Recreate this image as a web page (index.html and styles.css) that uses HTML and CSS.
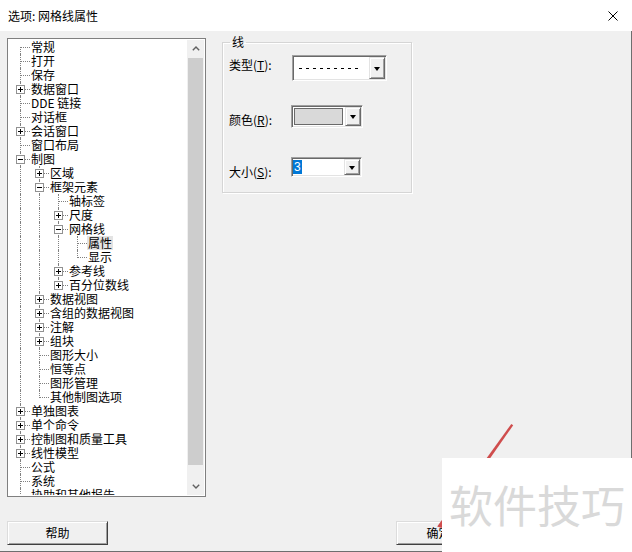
FILE: index.html
```html
<!DOCTYPE html>
<html lang="zh-CN">
<head>
<meta charset="utf-8">
<title>选项: 网格线属性</title>
<link rel="stylesheet" href="styles.css">
</head>
<body>
<div class="window">
  <div class="titlebar">
    <span class="title">选项: 网格线属性</span>
    <svg class="close" width="10" height="10" viewBox="0 0 10 10"><path d="M0.5 0.5L9.5 9.5M9.5 0.5L0.5 9.5" stroke="#000" stroke-width="1" fill="none"/></svg>
  </div>
  <div class="body">
    <div class="main">
      <div class="tree">
        <div class="list">
          <div class="row"><span class="c f"></span><span class="tx">常规</span></div>
          <div class="row"><span class="c t"></span><span class="tx">打开</span></div>
          <div class="row"><span class="c t"></span><span class="tx">保存</span></div>
          <div class="row"><span class="c t"><i class="pm plus"></i></span><span class="tx">数据窗口</span></div>
          <div class="row"><span class="c t"></span><span class="tx">DDE 链接</span></div>
          <div class="row"><span class="c t"></span><span class="tx">对话框</span></div>
          <div class="row"><span class="c t"><i class="pm plus"></i></span><span class="tx">会话窗口</span></div>
          <div class="row"><span class="c t"></span><span class="tx">窗口布局</span></div>
          <div class="row"><span class="c t"><i class="pm"></i></span><span class="tx">制图</span></div>
          <div class="row"><span class="c v"></span><span class="c t"><i class="pm plus"></i></span><span class="tx">区域</span></div>
          <div class="row"><span class="c v"></span><span class="c t"><i class="pm"></i></span><span class="tx">框架元素</span></div>
          <div class="row"><span class="c v"></span><span class="c v"></span><span class="c t"></span><span class="tx">轴标签</span></div>
          <div class="row"><span class="c v"></span><span class="c v"></span><span class="c t"><i class="pm plus"></i></span><span class="tx">尺度</span></div>
          <div class="row"><span class="c v"></span><span class="c v"></span><span class="c t"><i class="pm"></i></span><span class="tx">网格线</span></div>
          <div class="row"><span class="c v"></span><span class="c v"></span><span class="c v"></span><span class="c t"></span><span class="tx sel">属性</span></div>
          <div class="row"><span class="c v"></span><span class="c v"></span><span class="c v"></span><span class="c l"></span><span class="tx">显示</span></div>
          <div class="row"><span class="c v"></span><span class="c v"></span><span class="c t"><i class="pm plus"></i></span><span class="tx">参考线</span></div>
          <div class="row"><span class="c v"></span><span class="c v"></span><span class="c l"><i class="pm plus"></i></span><span class="tx">百分位数线</span></div>
          <div class="row"><span class="c v"></span><span class="c t"><i class="pm plus"></i></span><span class="tx">数据视图</span></div>
          <div class="row"><span class="c v"></span><span class="c t"><i class="pm plus"></i></span><span class="tx">含组的数据视图</span></div>
          <div class="row"><span class="c v"></span><span class="c t"><i class="pm plus"></i></span><span class="tx">注解</span></div>
          <div class="row"><span class="c v"></span><span class="c t"><i class="pm plus"></i></span><span class="tx">组块</span></div>
          <div class="row"><span class="c v"></span><span class="c t"></span><span class="tx">图形大小</span></div>
          <div class="row"><span class="c v"></span><span class="c t"></span><span class="tx">恒等点</span></div>
          <div class="row"><span class="c v"></span><span class="c t"></span><span class="tx">图形管理</span></div>
          <div class="row"><span class="c v"></span><span class="c l"></span><span class="tx">其他制图选项</span></div>
          <div class="row"><span class="c t"><i class="pm plus"></i></span><span class="tx">单独图表</span></div>
          <div class="row"><span class="c t"><i class="pm plus"></i></span><span class="tx">单个命令</span></div>
          <div class="row"><span class="c t"><i class="pm plus"></i></span><span class="tx">控制图和质量工具</span></div>
          <div class="row"><span class="c t"><i class="pm plus"></i></span><span class="tx">线性模型</span></div>
          <div class="row"><span class="c t"></span><span class="tx">公式</span></div>
          <div class="row"><span class="c t"></span><span class="tx">系统</span></div>
          <div class="row"><span class="c t"></span><span class="tx">协助和其他报告</span></div>
        </div>
        <div class="sb">
          <div class="arrow"><svg width="8" height="5" viewBox="0 0 8 5"><path d="M0.8 4.3L4 1.1L7.2 4.3" stroke="#606060" stroke-width="1.4" fill="none"/></svg></div>
          <div class="thumb"></div>
          <div class="track"></div>
          <div class="arrow"><svg width="8" height="5" viewBox="0 0 8 5"><path d="M0.8 0.7L4 3.9L7.2 0.7" stroke="#606060" stroke-width="1.4" fill="none"/></svg></div>
        </div>
      </div>
      <fieldset class="group">
        <legend>线</legend>
        <div class="frow r1">
          <span class="lbl">类型(<u>T</u>):</span>
          <div class="combo c1">
            <div class="val"><span class="dashes"></span></div>
            <div class="dd"><i class="tri"></i></div>
          </div>
        </div>
        <div class="frow r2">
          <span class="lbl">颜色(<u>R</u>):</span>
          <div class="combo c2">
            <div class="val"><span class="swatch"></span></div>
            <div class="dd"><i class="tri"></i></div>
          </div>
        </div>
        <div class="frow r3">
          <span class="lbl">大小(<u>S</u>):</span>
          <div class="combo c3">
            <div class="val"><span class="hl">3</span></div>
            <div class="dd"><i class="tri"></i></div>
          </div>
        </div>
      </fieldset>
    </div>
    <div class="footer">
      <button class="btn help">帮助</button>
      <div class="btns">
        <button class="btn ok">确定</button>
        <button class="btn ok">取消</button>
      </div>
    </div>
  </div>
  <svg class="stroke" width="632" height="552" viewBox="0 0 632 552"><polygon points="511.3,424 513.2,425.2 441.5,528 437.2,526.6" fill="#cf4d4d"/></svg>
  <div class="wm">软件技巧</div>
</div>
</body>
</html>
```

FILE: styles.css
```css
html, body {
  margin: 0;
  padding: 0;
}
body {
  font-family: "Noto Sans CJK SC", "Liberation Sans", sans-serif;
  font-size: 12px;
  color: #000;
}
.window {
  position: relative;
  width: 632px;
  height: 552px;
  display: flex;
  flex-direction: column;
  background: #f0f0f0;
  overflow: hidden;
}
.titlebar {
  height: 31px;
  flex: none;
  background: #fff;
  display: flex;
  align-items: center;
  justify-content: space-between;
  padding: 0 14px 0 8px;
  box-sizing: border-box;
}
.title {
  font-size: 12px;
  line-height: 14px;
}
.close {
  display: block;
}
.body {
  flex: 1;
  display: flex;
  flex-direction: column;
  border-right: 1px solid #6e6e6e;
  border-bottom: 1px solid #6e6e6e;
}
.main {
  display: flex;
  align-items: flex-start;
  gap: 16px;
  padding: 4px 0 0 7px;
  height: 466px;
  box-sizing: border-box;
}
.tree {
  width: 199px;
  height: 459px;
  margin-top: 3px;
  box-sizing: border-box;
  border: 1px solid #7f7f7f;
  padding: 1px;
  background: #fff;
  display: flex;
  flex: none;
}
.list {
  flex: 1;
  overflow: hidden;
  padding-left: 2px;
}
.row {
  display: flex;
  height: 14px;
}
.c {
  position: relative;
  width: 19px;
  height: 14px;
  flex: none;
}
.c.v::before,
.c.t::before,
.c.l::before,
.c.f::before {
  content: "";
  position: absolute;
  left: 9px;
  top: 0;
  bottom: 0;
  border-left: 1px dotted #808080;
}
.c.l::before {
  bottom: auto;
  height: 8px;
}
.c.f::before {
  top: 7px;
}
.c.t::after,
.c.l::after,
.c.f::after {
  content: "";
  position: absolute;
  left: 10px;
  top: 7px;
  width: 9px;
  border-top: 1px dotted #808080;
}
.pm {
  position: absolute;
  left: 5px;
  top: 3px;
  width: 9px;
  height: 9px;
  box-sizing: border-box;
  border: 1px solid #919191;
  background: #fff;
  z-index: 1;
}
.pm::before {
  content: "";
  position: absolute;
  left: 1px;
  top: 3px;
  width: 5px;
  height: 1px;
  background: #000;
}
.pm.plus::after {
  content: "";
  position: absolute;
  left: 3px;
  top: 1px;
  width: 1px;
  height: 5px;
  background: #000;
}
.tx {
  padding: 0 1px;
  line-height: 14px;
  white-space: nowrap;
}
.tx.sel {
  background: #e3e3e3;
}
.sb {
  width: 17px;
  flex: none;
  background: #f0f0f0;
  display: flex;
  flex-direction: column;
}
.sb .arrow {
  height: 17px;
  flex: none;
  display: flex;
  align-items: center;
  justify-content: center;
}
.sb .thumb {
  height: 407px;
  margin: 1px 1px 0 1px;
  background: #cdcdcd;
  flex: none;
}
.sb .track {
  flex: 1;
}
.group {
  width: 190px;
  box-sizing: border-box;
  margin: 0;
  padding: 6px 0 13px 6px;
  border: 1px solid #d5d5d5;
  box-shadow: inset 1px 1px #fff, 1px 1px #fff;
  flex: none;
}
.group legend {
  padding: 0 2px;
  margin-left: 1px;
  line-height: 14px;
  font-size: 12px;
}
.frow {
  display: flex;
  align-items: flex-start;
}
.lbl {
  width: 62px;
  flex: none;
  line-height: 14px;
  white-space: nowrap;
}
.lbl u {
  text-underline-offset: 1px;
}
.r1 .lbl { margin-top: 3px; }
.r2 { margin-top: 24px; }
.r2 .lbl { margin-top: 8px; }
.r3 { margin-top: 29px; }
.r3 .lbl { margin-top: 8px; }
.combo {
  display: flex;
  box-sizing: border-box;
  background: #fff;
  border: 1px solid;
  border-color: #a0a0a0 #fff #fff #a0a0a0;
  box-shadow: inset 1px 1px #696969, inset -1px -1px #e3e3e3;
  padding: 1px;
  flex: none;
}
.c1 { width: 95px; height: 26px; margin-left: 1px; }
.c2 { width: 72px; height: 23px; }
.c3 { width: 71px; height: 20px; }
.val {
  flex: 1;
  display: flex;
  align-items: center;
  min-width: 0;
}
.dd {
  width: 16px;
  flex: none;
  box-sizing: border-box;
  background: #f0f0f0;
  border: 1px solid;
  border-color: #e3e3e3 #696969 #696969 #e3e3e3;
  box-shadow: inset 1px 1px #fff, inset -1px -1px #a0a0a0;
  display: flex;
  align-items: center;
  justify-content: center;
}
.tri {
  width: 0;
  height: 0;
  border-left: 3.5px solid transparent;
  border-right: 3.5px solid transparent;
  border-top: 4px solid #000;
  margin-top: 1px;
}
.dashes {
  display: block;
  width: 59px;
  height: 1px;
  margin-left: 5px;
  background: repeating-linear-gradient(to right, #000 0 3px, transparent 3px 7px);
}
.swatch {
  display: block;
  align-self: stretch;
  flex: 1;
  margin: 1px 2px 1px 1px;
  box-sizing: border-box;
  border: 1px solid #6a6a6a;
  background: #d9d9d9;
}
.hl {
  font-family: "Liberation Sans", sans-serif;
  font-size: 12px;
  line-height: 14px;
  padding: 0 1px;
  margin-left: 0;
  background: #0078d7;
  color: #fff;
}
.footer {
  display: flex;
  justify-content: space-between;
  padding: 24px 59px 0 7px;
}
.btns {
  display: flex;
  gap: 6px;
}
.btn {
  font-family: "Noto Sans CJK SC", "Liberation Sans", sans-serif;
  font-size: 12px;
  line-height: 14px;
  color: #000;
  height: 24px;
  box-sizing: border-box;
  background: #f0f0f0;
  border: 1px solid;
  border-color: #dcdcdc #404040 #404040 #dcdcdc;
  box-shadow: inset 1px 1px #fff, inset -1px -1px #a0a0a0;
  padding: 0;
  margin: 0;
}
.btn.help { width: 101px; }
.btn.ok { width: 85px; }
.stroke {
  position: absolute;
  left: 0;
  top: 0;
  pointer-events: none;
}
.wm {
  position: absolute;
  left: 442px;
  top: 458px;
  width: 190px;
  height: 94px;
  background: #fff;
  display: flex;
  align-items: center;
  justify-content: center;
  font-family: "Noto Sans CJK SC", sans-serif;
  font-size: 44px;
  line-height: 50px;
  color: #d9d9d9;
  padding-bottom: 2px;
  box-sizing: border-box;
}
```
